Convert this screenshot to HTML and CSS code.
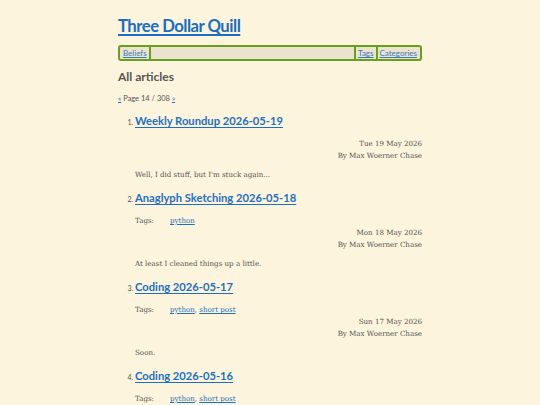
FILE: index.html
```html
<!DOCTYPE html>
<html lang="en">
<head>
<meta charset="utf-8">
<title>Three Dollar Quill</title>
<link rel="stylesheet" href="styles.css">
</head>
<body>
<div class="page">
  <header class="site-header">
    <h1 class="site-title"><a href="#">Three Dollar Quill</a></h1>
    <nav class="site-nav">
      <a class="nav-item nav-left" href="#">Beliefs</a>
      <span class="nav-spacer"></span>
      <a class="nav-item nav-right" href="#">Tags</a>
      <a class="nav-item nav-right" href="#">Categories</a>
    </nav>
  </header>
  <main>
    <h2 class="section-title">All articles</h2>
    <p class="pager"><a href="#">«</a> Page 14 / 308 <a href="#">»</a></p>
    <ol class="articles">
      <li class="article">
        <h3 class="article-title"><a href="#">Weekly Roundup 2026-05-19</a></h3>
        <div class="info">
          <div class="meta"><div>Tue 19 May 2026</div><div>By Max Woerner Chase</div></div>
        </div>
        <p class="summary">Well, I did stuff, but I'm stuck again...</p>
      </li>
      <li class="article">
        <h3 class="article-title"><a href="#">Anaglyph Sketching 2026-05-18</a></h3>
        <div class="info">
          <div class="tags"><span class="tags-label">Tags:</span><span><a href="#">python</a></span></div>
          <div class="meta"><div>Mon 18 May 2026</div><div>By Max Woerner Chase</div></div>
        </div>
        <p class="summary">At least I cleaned things up a little.</p>
      </li>
      <li class="article">
        <h3 class="article-title"><a href="#">Coding 2026-05-17</a></h3>
        <div class="info">
          <div class="tags"><span class="tags-label">Tags:</span><span><a href="#">python</a>, <a href="#">short post</a></span></div>
          <div class="meta"><div>Sun 17 May 2026</div><div>By Max Woerner Chase</div></div>
        </div>
        <p class="summary">Soon.</p>
      </li>
      <li class="article">
        <h3 class="article-title"><a href="#">Coding 2026-05-16</a></h3>
        <div class="info">
          <div class="tags"><span class="tags-label">Tags:</span><span><a href="#">python</a>, <a href="#">short post</a></span></div>
          <div class="meta"><div>Sat 16 May 2026</div><div>By Max Woerner Chase</div></div>
        </div>
        <p class="summary">More progress.</p>
      </li>
    </ol>
  </main>
</div>
</body>
</html>
```
FILE: styles.css
```css
html, body {
  margin: 0;
  padding: 0;
  background: #fcf4dc;
}
body {
  font-family: "DejaVu Serif", serif;
  color: #555;
  font-size: 7.2px;
}
a { color: #1f6fc0; }
.page {
  width: 304px;
  margin: 0 auto;
  padding-top: 14px;
}
.site-title {
  margin: 0;
  font-family: Lato, sans-serif;
  font-size: 16.7px;
  font-weight: 700;
  letter-spacing: -0.5px;
  line-height: 24px;
}
.site-title a {
  color: #1a6dc0;
  text-decoration-thickness: 1.5px;
  text-underline-offset: 2px;
}
.site-nav {
  margin-top: 7px;
  display: flex;
  border: 2px solid #65a01e;
  border-radius: 3px;
  background: #ebe3cd;
  font-family: Lato, sans-serif;
  font-size: 8px;
  line-height: 12px;
  padding: 0 1px;
}
.nav-item {
  color: #3a78bf;
  padding: 0 2px;
}
.nav-left { border-right: 2px solid #65a01e; }
.nav-right { border-left: 2px solid #65a01e; }
.nav-spacer { flex: 1; }
.section-title {
  margin: 8px 0 0;
  font-family: Lato, sans-serif;
  font-size: 12px;
  font-weight: 700;
  line-height: 16px;
  color: #555;
}
.pager {
  margin: 8px 0 0;
  font-family: Lato, sans-serif;
  font-size: 7.5px;
  line-height: 12px;
}
.articles {
  margin: 7px 0 0;
  padding-left: 17px;
  font-family: Lato, sans-serif;
  font-size: 7px;
}
.article { margin-top: 8px; }
.article:first-child { margin-top: 0; }
.article-title {
  margin: 0;
  font-family: Lato, sans-serif;
  font-size: 11.2px;
  font-weight: 700;
  line-height: 18px;
}
.article-title a {
  text-decoration-thickness: 1px;
  text-underline-offset: 1.5px;
}
.info {
  margin-top: 8px;
  line-height: 12px;
  font-family: "DejaVu Serif", serif;
  font-size: 7.1px;
}
.tags {
  display: flex;
}
.tags-label { width: 35px; }
.meta {
  text-align: right;
}
.summary {
  margin: 7px 0 0;
  line-height: 12px;
  font-family: "DejaVu Serif", serif;
  font-size: 7.1px;
}
```
